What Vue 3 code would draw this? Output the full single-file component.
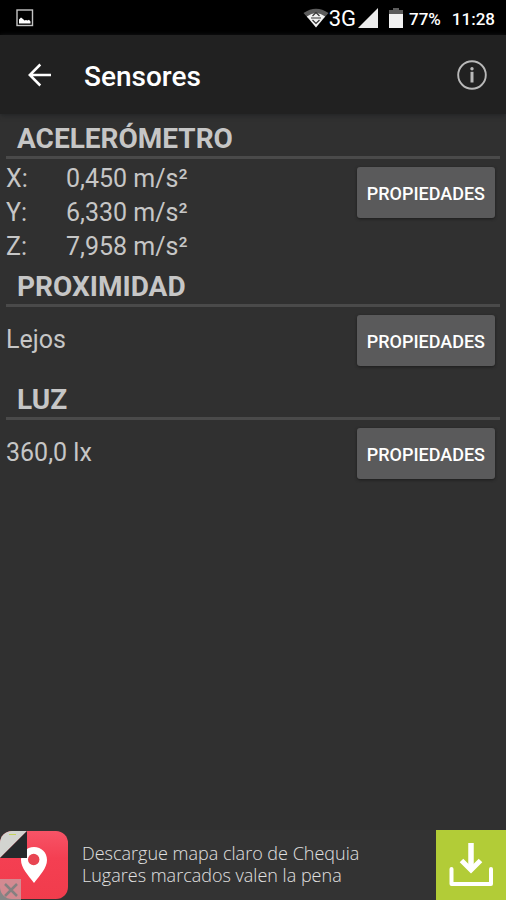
<script setup>
const sensors = [
  {
    id: 'acelerometro',
    title: 'ACELERÓMETRO',
    axes: [
      { label: 'X:', value: '0,450 m/s²' },
      { label: 'Y:', value: '6,330 m/s²' },
      { label: 'Z:', value: '7,958 m/s²' },
    ],
  },
  { id: 'proximidad', title: 'PROXIMIDAD', reading: 'Lejos' },
  { id: 'luz', title: 'LUZ', reading: '360,0 lx' },
]
</script>

<template>
  <div class="screen">
    <div class="status">
      <svg class="picture" width="18" height="18" viewBox="0 0 18 18" aria-hidden="true">
        <rect x="1" y="1" width="15.5" height="15.5" fill="none" stroke="#c4c4c4" stroke-width="1.4" />
        <path d="M3 14.5V10.5L5 8.5L7 10L8.5 11.5L10 11L11.5 11.5L13 10.8L14.5 12.5V14.5Z" fill="#fff" />
      </svg>
      <div class="indicators">
        <svg width="26" height="20" viewBox="0 0 26 20" aria-hidden="true">
          <path d="M0.5 5Q13 -3.5 25.5 5L21 10Q13 3.500 5 10Z" fill="#5c5c5c" />
          <path d="M3.800 8.500Q13 1.500 22.200 8.500L13 19.500Z" fill="#f2f2f2" />
          <path d="M9.500 8L13 4.500L16.500 8M9.500 12L13 15.500L16.500 12M8 10H18" fill="none" stroke="#333" stroke-width="1.200" />
        </svg>
        <span class="network">3G</span>
        <svg class="signal" width="20" height="20" viewBox="0 0 20 20" aria-hidden="true">
          <path d="M20 0V20H0Z" fill="#ececec" />
        </svg>
        <svg class="battery" width="14" height="20" viewBox="0 0 14 20" aria-hidden="true">
          <path d="M4 0H10V2H14V6H0V2H4Z" fill="#5c5c5c" />
          <rect y="6" width="14" height="14" fill="#f2f2f2" />
        </svg>
        <span class="figures">77%</span>
        <span class="figures clock">11:28</span>
      </div>
    </div>

    <header class="appbar">
      <button class="icon-button" type="button" aria-label="Atrás">
        <svg width="24" height="24" viewBox="0 0 24 24" fill="none" stroke="#fff" stroke-width="2.500">
          <path d="M23 12H2M12.300 1.500L1.800 12L12.300 22.500" />
        </svg>
      </button>
      <h1>Sensores</h1>
      <button class="icon-button" type="button" aria-label="Información">
        <svg width="32" height="32" viewBox="0 0 32 32">
          <circle cx="16" cy="16" r="13.800" fill="none" stroke="#b9b9b9" stroke-width="1.900" />
          <circle cx="16" cy="9.800" r="1.700" fill="#b9b9b9" />
          <path d="M16 12.800V23.500" stroke="#b9b9b9" stroke-width="3" />
        </svg>
      </button>
    </header>

    <main>
      <section v-for="sensor in sensors" :key="sensor.id">
        <h2 :id="sensor.id">{{ sensor.title }}</h2>
        <div class="body">
          <dl v-if="sensor.axes">
            <div v-for="axis in sensor.axes" :key="axis.label" class="axis">
              <dt>{{ axis.label }}</dt>
              <dd>{{ axis.value }}</dd>
            </div>
          </dl>
          <p v-else class="reading">{{ sensor.reading }}</p>
          <button class="properties" type="button" :aria-describedby="sensor.id">PROPIEDADES</button>
        </div>
      </section>
    </main>

    <aside class="ad">
      <div class="ad-icon">
        <svg width="68" height="70" viewBox="0 0 68 70" aria-hidden="true">
          <defs>
            <linearGradient id="red" x1="0" y1="0" x2="0" y2="1">
              <stop offset="0" stop-color="#f75467" />
              <stop offset="0.400" stop-color="#f43f52" />
              <stop offset="1" stop-color="#f13c4c" />
            </linearGradient>
            <clipPath id="rounded"><rect y="1" width="68" height="68" rx="12" /></clipPath>
          </defs>
          <g clip-path="url(#rounded)">
            <rect y="1" width="68" height="68" fill="url(#red)" />
            <path d="M34 17C26.500 17 21 22.500 21 30C21 38 28 45 34 53C40 45 47 38 47 30C47 22.500 41.500 17 34 17Z" fill="#fff" />
            <circle cx="33.700" cy="29.500" r="5.700" fill="#e84552" />
            <path d="M0 1H27L0 28Z" fill="#d3d4d0" />
            <path d="M27 1V28H0Z" fill="#25292b" />
            <path d="M9 4.500H16" stroke="#c4d35b" stroke-width="1.200" />
          </g>
        </svg>
        <button class="close" type="button" aria-label="Cerrar anuncio">
          <svg width="14" height="14" viewBox="0 0 14 14" stroke="#858080" stroke-width="2.500">
            <path d="M1 1L13 13M13 1L1 13" />
          </svg>
        </button>
      </div>
      <p>Descargue mapa claro de Chequia<br />Lugares marcados valen la pena</p>
      <a class="download" href="#" aria-label="Descargar">
        <svg width="44" height="44" viewBox="0 0 44 44" fill="none" stroke="#fff">
          <path d="M22 0V26" stroke-width="5.500" />
          <path d="M12.500 17.500L22 27L31.500 17.500" stroke-width="5" />
          <path d="M2.500 26V41H42V26" stroke-width="4" stroke-linejoin="round" stroke-linecap="round" />
        </svg>
      </a>
    </aside>
  </div>
</template>

<style>
body {
  margin: 0;
  background: #303030;
}
</style>

<style scoped>
.screen {
  display: flex;
  flex-direction: column;
  min-height: 100vh;
  background: #303030;
  color: #c6c6c6;
  font-family: Roboto, sans-serif;
}
h1, h2, p, dl, dd {
  margin: 0;
}
button {
  font-family: inherit;
  border: 0;
  cursor: pointer;
}
svg {
  display: block;
}
.status {
  display: flex;
  justify-content: space-between;
  align-items: center;
  height: 35px;
  padding: 0 11px 0 16px;
  background: #000;
  color: #fff;
}
.indicators {
  display: flex;
  align-items: center;
}
.network {
  padding-top: 2px;
  font-size: 22px;
  line-height: 32px;
}
.signal {
  margin-left: 2px;
}
.battery {
  margin: 0 6px 0 11px;
}
.figures {
  padding-top: 2px;
  font-size: 17px;
  font-weight: 500;
}
.clock {
  margin-left: 11px;
}
.appbar {
  display: flex;
  align-items: center;
  height: 79px;
  padding: 0 14px 0 20px;
  background: #212121;
  box-shadow: 0 1px 5px #202224;
}
.appbar h1 {
  flex: 1;
  margin-left: 24px;
  padding-top: 4px;
  color: #fff;
  font-size: 28px;
  font-weight: 500;
  line-height: 36px;
}
.icon-button {
  display: grid;
  place-items: center;
  width: 40px;
  height: 40px;
  padding: 0;
  background: none;
}
main {
  flex: 1;
  padding: 4px 6px 0;
}
h2 {
  padding: 4px 0 0 11px;
  border-bottom: 3px solid #4a4a4a;
  font-size: 28px;
  font-weight: 700;
  line-height: 34px;
}
.body {
  display: flex;
  justify-content: space-between;
  align-items: flex-start;
  padding: 0 5px 2px 0;
  font-size: 25px;
  line-height: 34px;
}
dl {
  padding-top: 3px;
}
.axis {
  display: flex;
}
dt {
  width: 60px;
}
.reading {
  padding: 16px 0 20px;
}
.properties {
  margin-top: 8px;
  padding: 2px 10px 0;
  border-radius: 3px;
  background: #5a5a5b;
  box-shadow: 0 1px 3px #1c1c1c;
  color: #fff;
  font-size: 18px;
  font-weight: 500;
  line-height: 49px;
}
.ad {
  display: flex;
  align-items: stretch;
  height: 70px;
  background: #333;
}
.ad-icon {
  position: relative;
}
.close {
  position: absolute;
  left: 0;
  bottom: 0;
  display: grid;
  place-items: center;
  width: 21px;
  height: 21px;
  padding: 0;
  background: rgba(190, 190, 190, 0.6);
}
.ad p {
  flex: 1;
  align-self: center;
  padding: 0 0 2px 14px;
  color: #e0e0e0;
  font-family: "Open Sans", sans-serif;
  font-size: 18px;
  font-weight: 300;
  line-height: 22px;
}
.download {
  display: grid;
  place-items: center;
  width: 70px;
  background: #b2cc37;
}
</style>
